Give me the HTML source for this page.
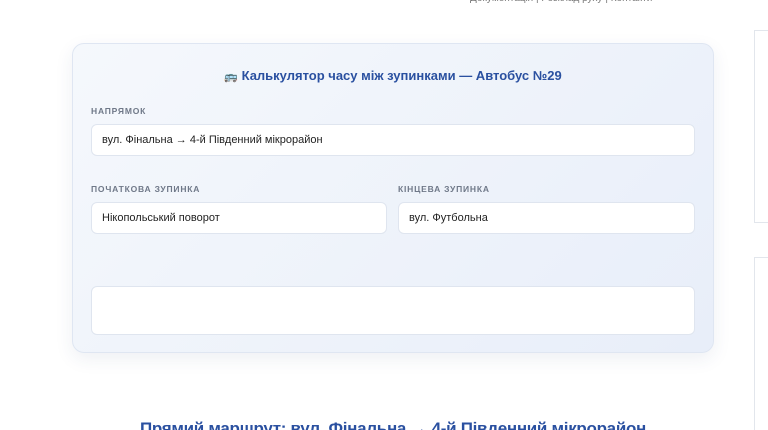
<!DOCTYPE html>
<html><head><meta charset="utf-8"><style>
*{box-sizing:border-box;margin:0;padding:0}
html,body{width:768px;height:430px;overflow:hidden}
body{background:#fff;font-family:"Liberation Sans",sans-serif;position:relative}
.card{position:absolute;left:72px;top:43px;width:642px;height:310px;border:1px solid #dfe6f2;border-radius:12px;background:linear-gradient(135deg,#f5f8fc,#e8eef9);box-shadow:0 6px 18px rgba(40,60,110,.08)}
.title{position:absolute;left:0;right:0;top:24px;text-align:center;font-size:13px;font-weight:bold;color:#2a50a0}
.lbl{position:absolute;font-size:8.5px;font-weight:bold;color:#6f7888;letter-spacing:.8px}
.inp{position:absolute;background:#fff;border:1px solid #dfe5ef;border-radius:6px;font-size:11px;color:#222;padding-left:10px;line-height:30px}
.side{position:absolute;left:754px;width:14px;border:1px solid #e2e6ec;border-right:none}
h2{position:absolute;left:0;width:786px;text-align:center;top:420px;line-height:18px;font-size:17px;color:#2a50a0;font-weight:bold;letter-spacing:-.3px;height:10px;overflow:hidden}
.top{position:absolute;left:470px;top:-7px;font-size:10px;color:#777;white-space:nowrap}
</style></head><body>
<div class="top">Документація | Розклад руху | Контакти</div>
<div class="side" style="top:30px;height:193px"></div>
<div class="side" style="top:257px;height:173px;border-bottom:none"></div>
<div class="card">
<div class="title"><span style="font-size:11px">🚌</span> Калькулятор часу між зупинками — Автобус №29</div>
<div class="lbl" style="left:18px;top:62px">НАПРЯМОК</div>
<div class="inp" style="left:18px;top:80px;width:604px;height:32px">вул. Фінальна → 4-й Південний мікрорайон</div>
<div class="lbl" style="left:18px;top:140px">ПОЧАТКОВА ЗУПИНКА</div>
<div class="lbl" style="left:325px;top:140px">КІНЦЕВА ЗУПИНКА</div>
<div class="inp" style="left:18px;top:158px;width:296px;height:32px">Нікопольський поворот</div>
<div class="inp" style="left:325px;top:158px;width:297px;height:32px">вул. Футбольна</div>
<div class="inp" style="left:18px;top:242px;width:604px;height:49px"></div>
</div>
<h2>Прямий маршрут: вул. Фінальна → 4-й Південний мікрорайон</h2>
</body></html>
